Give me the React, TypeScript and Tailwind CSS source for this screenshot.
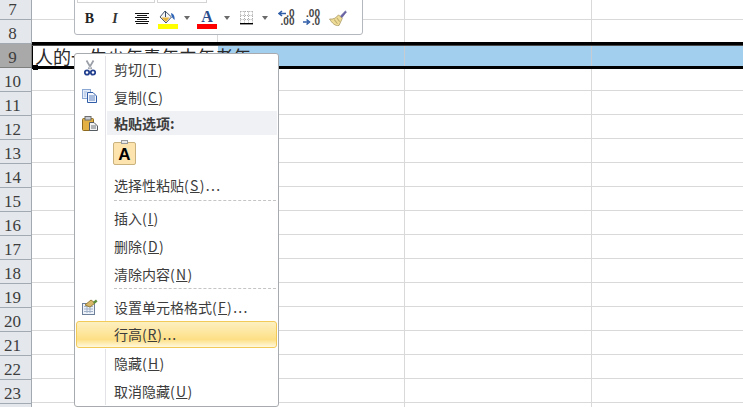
import React from "react";

const sans = "font-['Noto_Sans_CJK_SC','Liberation_Sans',sans-serif]";
const rowNums = [8, 9, 10, 11, 12, 13, 14, 15, 16, 17, 18, 19, 20, 21, 22, 23];

function Caret() {
  return <div className="w-0 h-0 border-x-[3.5px] border-x-transparent border-t-[4px] border-t-[#6a6a6a]" />;
}

function Cells() {
  return (
    <>
      <div className="w-[186px] h-full border-r border-[#d9d9d9]" />
      <div className="w-[187px] h-full border-r border-[#d9d9d9]" />
      <div className="w-[187px] h-full border-r border-[#d9d9d9]" />
      <div className="flex-1 h-full" />
    </>
  );
}

function GridRow({ h }: { h: string }) {
  return (
    <div className={`flex ${h} border-b border-[#d9d9d9]`}>
      <Cells />
    </div>
  );
}

function Scissors() {
  return (
    <svg width="12" height="16" viewBox="0 0 12 16" className="mb-[3px]">
      <path d="M2.5 0.5 L7.5 9 M9.5 0.5 L4.5 9" stroke="#9a9ea6" strokeWidth="1.7" fill="none" />
      <circle cx="6" cy="7.5" r="0.9" fill="#d5d7dc" />
      <circle cx="3" cy="12.5" r="2.2" fill="none" stroke="#24418f" strokeWidth="1.8" />
      <circle cx="9" cy="12.5" r="2.2" fill="none" stroke="#24418f" strokeWidth="1.8" />
    </svg>
  );
}

function CopyIcon() {
  return (
    <svg width="15" height="14" viewBox="0 0 15 14" className="mb-[3px]">
      <rect x="0.5" y="0.5" width="8" height="9" fill="#e3ecf9" stroke="#8aa6d2" />
      <path d="M5.5 3.5 H11 L14.5 7 V13.5 H5.5 Z" fill="#f4f8fe" stroke="#2f5da8" />
      <path d="M7 7h6M7 9h6M7 11h6" stroke="#5a80bd" />
      <path d="M2 3h3M2 5h2M2 7h2" stroke="#a7bcdd" />
    </svg>
  );
}

function PasteIcon() {
  return (
    <svg width="16" height="15" viewBox="0 0 16 15">
      <rect x="0.5" y="2.5" width="11" height="12" rx="1" fill="#e3b143" stroke="#8d6a1f" />
      <rect x="3" y="0.5" width="6" height="3.5" fill="#c7ccd2" stroke="#6f6f6f" />
      <path d="M7.5 6.5 H12 L15.5 10 V14.5 H7.5 Z" fill="#f3f3f3" stroke="#555b63" />
      <path d="M9 10h5M9 12h5" stroke="#6c737c" />
    </svg>
  );
}

function FormatIcon() {
  return (
    <svg width="16" height="16" viewBox="0 0 16 16">
      <rect x="0.5" y="4.5" width="12" height="11" fill="#eef3fa" stroke="#6d7f99" />
      <path d="M2 7.5h9M2 10h9M2 12.5h9M5 6v8M8 6v8" stroke="#9fb0c7" />
      <path d="M3 6 L9 1 L13 4 L8 8 Z" fill="#d7b768" stroke="#9a7f3a" />
      <path d="M11 3 L14 0.5 L15.5 2.5 L12.5 5 Z" fill="#5d8f3e" />
    </svg>
  );
}

function FillIcon() {
  return (
    <svg width="20" height="19" viewBox="0 0 20 19">
      <path d="M7 1 L13.5 7 L8 13 L2 7 Z" fill="#f4f5f7" stroke="#4d5a70" />
      <path d="M3 7.5 H11.5 L8 12 Z" fill="#e8b53e" />
      <path d="M7.5 1 V7" stroke="#3c4a62" />
      <path d="M13 3 C16 4 17 7 16.5 10 C15 9 14 7 13.5 6 Z" fill="#2f65b8" />
      <rect x="0" y="14" width="20" height="5" fill="#ffff00" />
    </svg>
  );
}

function BorderIcon() {
  return (
    <svg width="13" height="14" viewBox="0 0 13 14">
      <path d="M0.5 0.5H12.5M0.5 4.5H12.5M0.5 8.5H12.5M0.5 0.5V12M4.5 0.5V12M8.5 0.5V12M12.5 0.5V12" stroke="#8a8a8a" strokeWidth="0.8" strokeDasharray="1 1.2" fill="none" />
      <rect x="0" y="12" width="13" height="1.4" fill="#000" />
    </svg>
  );
}

function BrushIcon() {
  return (
    <svg width="18" height="17" viewBox="0 0 17 16">
      <path d="M10.5 6 L15.5 0.8 L16.5 1.8 L12 7.5 Z" fill="#6a63a8" stroke="#4c4c86" strokeWidth="0.5" />
      <path d="M9 4.5 L12.5 8 L9.5 14.5 C6 15.5 3 12.5 0.5 8.5 C4 9 7 7.5 9 4.5 Z" fill="#efdc96" stroke="#a3935c" strokeWidth="0.7" />
      <path d="M5 9 L8 13 M7.5 7.5 L10 11" stroke="#bfae6e" />
    </svg>
  );
}

function DecIcon({ flip }: { flip?: boolean }) {
  const top = flip ? ".00" : ".0";
  const bottom = flip ? ".0" : ".00";
  return (
    <div className="relative w-[17px] h-[16px] font-['Liberation_Sans',sans-serif] text-[10px] font-bold leading-[8px] text-[#444] text-right">
      <div>{top}</div>
      <div>{bottom}</div>
      <svg className="absolute left-0 top-0" width="17" height="16" viewBox="0 0 17 16">
        {flip ? (
          <path d="M0 12H5M3.5 9.5 L6.5 12 L3.5 14.5" stroke="#2f5da8" strokeWidth="1.6" fill="none" />
        ) : (
          <path d="M8 3.5H1.5M4 1 L1 3.5 L4 6" stroke="#2f5da8" strokeWidth="1.6" fill="none" />
        )}
      </svg>
    </div>
  );
}

function Item({ icon, label, k, tail = "" }: { icon?: React.ReactNode; label: string; k: string; tail?: string }) {
  return (
    <div className="flex h-[28px] items-stretch">
      <div className="w-[31px] border-r border-[#e2e3e6] flex items-center justify-center pr-px">{icon}</div>
      <div className="pl-[8px] pb-px flex items-center text-[14px] text-[#3c3c3c] leading-none">
        {label}
        <span className="tracking-[1.3px]">
          (<span className="underline">{k}</span>){tail}
        </span>
      </div>
    </div>
  );
}

function Sep() {
  return (
    <div className="flex h-[5px]">
      <div className="w-[31px] border-r border-[#e2e3e6]" />
      <div className="flex-1 ml-[8px] mr-[2px] border-t border-dashed border-[#c5c5c5]" />
    </div>
  );
}

export default function App() {
  return (
    <div className={`relative w-[743px] h-[407px] overflow-hidden bg-white ${sans}`}>
      <div className="flex h-full">
        {/* row headers */}
        <div className="w-[32px] shrink-0 flex flex-col font-['Liberation_Serif',serif] text-[17px] text-[#3d3d3d] leading-none">
          <div className="h-[20px] shrink-0 bg-[#e4e7ec] border-r border-b border-[#a3a9b1] flex items-end justify-center pr-[6px] pb-[1px]">7</div>
          {rowNums.map((n) => (
            <div
              key={n}
              className={
                n === 9
                  ? "h-[24px] shrink-0 bg-[#a9a9a9] border-r border-b border-[#7f7f7f] flex items-center justify-center pr-[6px] pt-[4px]"
                  : "h-[24px] shrink-0 bg-[#e4e7ec] border-r border-b border-[#a3a9b1] flex items-center justify-center pr-[6px] pt-[4px]"
              }
            >
              {n}
            </div>
          ))}
          <div className="h-[24px] shrink-0 bg-[#e4e7ec] border-r border-[#a3a9b1]" />
        </div>
        {/* grid */}
        <div className="flex-1 flex flex-col">
          <GridRow h="h-[20px] shrink-0" />
          <div className="flex h-[22px] shrink-0">
            <Cells />
          </div>
          <div className="relative h-[27px] shrink-0 flex flex-col">
            <div className="h-[3px] bg-black" />
            <div className="h-px bg-[#4a4a4a]" />
            <div className="flex h-[20px]">
              <div className="w-[186px] h-full bg-white border-l border-black whitespace-nowrap pl-[2px] text-[18px] leading-[20px] text-[#2a2a2a] relative">
                人的一生少年青年中年老年
              </div>
              <div className="w-[187px] h-full bg-[#a3cfef] border-r border-[#c6ccd2]" />
              <div className="w-[187px] h-full bg-[#a3cfef] border-r border-[#c6ccd2]" />
              <div className="flex-1 h-full bg-[#a3cfef]" />
            </div>
            <div className="h-px bg-white" />
            <div className="h-[3px] bg-black" />
            <div className="absolute left-[1px] top-[23px] w-[5px] h-[5px] bg-black" />
          </div>
          <GridRow h="h-[22px] shrink-0" />
          {[11, 12, 13, 14, 15, 16, 17, 18, 19, 20, 21, 22, 23, 24].map((n) => (
            <GridRow key={n} h="h-[24px] shrink-0" />
          ))}
        </div>
      </div>

      {/* mini toolbar */}
      <div className="absolute left-[74px] top-[-13px] w-[289px] h-[48px] bg-white border border-[#b4b7bd] rounded-[3px] pl-[2px]">
        <div className="flex h-[16px] gap-[2px] pt-0">
          <div className="w-[78px] h-[15px] border border-[#d4d4d4]" />
          <div className="w-[50px] h-[15px] border border-[#d4d4d4]" />
        </div>
        <div className="flex items-center h-[30px] mt-[-1px]">
          <div className="w-[25px] flex justify-center font-['Liberation_Serif',serif] font-bold text-[14px] text-[#222]">B</div>
          <div className="w-[26px] flex justify-center font-['Liberation_Serif',serif] italic font-bold text-[14px] text-[#333]">I</div>
          <div className="w-[28px] flex justify-center">
            <svg width="14" height="11" viewBox="0 0 14 11">
              <path d="M0 0.5h14M2 2.5h10M0 4.5h14M2 6.5h10M0 8.5h14M1 10.5h12" stroke="#111" strokeWidth="1" />
            </svg>
          </div>
          <div className="w-[23px] flex justify-center pt-[2px]"><FillIcon /></div>
          <div className="w-[16px] flex justify-center"><Caret /></div>
          <div className="w-[24px] flex flex-col items-center pt-[3px]">
            <div className="font-['Liberation_Serif',serif] font-bold text-[16px] leading-[14px] text-[#2b4c8c]">A</div>
            <div className="w-[20px] h-[5px] bg-[#ff0000]" />
          </div>
          <div className="w-[16px] flex justify-center"><Caret /></div>
          <div className="w-[22px] flex justify-center"><BorderIcon /></div>
          <div className="w-[16px] flex justify-center"><Caret /></div>
          <div className="w-[26px] flex justify-center"><DecIcon /></div>
          <div className="w-[25px] flex justify-center"><DecIcon flip /></div>
          <div className="w-[28px] flex justify-center"><BrushIcon /></div>
        </div>
      </div>

      {/* context menu */}
      <div className="absolute left-[74px] top-[53px] w-[205px] h-[354px] bg-white border border-[#a7abb0] rounded-[3px] pt-[2px] pb-px flex flex-col">
        <Item icon={<Scissors />} label="剪切" k="T" />
        <Item icon={<CopyIcon />} label="复制" k="C" />
        <div className="flex h-[24px] mt-[-1px]">
          <div className="w-[31px] border-r border-[#e2e3e6] flex items-start justify-center pt-[5px] pr-px"><PasteIcon /></div>
          <div className="flex-1 ml-px mr-px bg-[#f0f1f5] pl-[7px] flex items-center text-[14px] font-bold text-[#3c3c3c] leading-none">粘贴选项:</div>
        </div>
        <div className="flex h-[37px]">
          <div className="w-[31px] border-r border-[#e2e3e6]" />
          <div className="pl-[7px] pt-[7px]">
            <div className="relative w-[23px] h-[23px] bg-[#fde3ae] border border-[#c9b27e] rounded-[2px] flex items-center justify-center pt-[2px] font-['Liberation_Sans',sans-serif] font-bold text-[17px] leading-none text-black">
              A
              <div className="absolute left-[7px] top-[-3px] w-[7px] h-[4px] bg-[#e9e9e9] border border-[#9a9a9a]" />
            </div>
          </div>
        </div>
        <Item label="选择性粘贴" k="S" tail="..." />
        <Sep />
        <Item label="插入" k="I" />
        <Item label="删除" k="D" />
        <Item label="清除内容" k="N" />
        <Sep />
        <Item icon={<FormatIcon />} label="设置单元格格式" k="F" tail="..." />
        <div className="h-[28px] pl-px pr-px">
          <div className="h-[27px] rounded-[3px] border border-[#f2ca58] bg-gradient-to-b from-[#fdf0c0] via-[#fddf85] via-70% to-[#fff8dc] pl-[37px] pb-px flex items-center text-[14px] text-[#3c3c3c] leading-none">
            行高
            <span className="tracking-[0.8px]">
              (<span className="underline">R</span>)...
            </span>
          </div>
        </div>
        <Item label="隐藏" k="H" />
        <Item label="取消隐藏" k="U" />
      </div>
    </div>
  );
}
